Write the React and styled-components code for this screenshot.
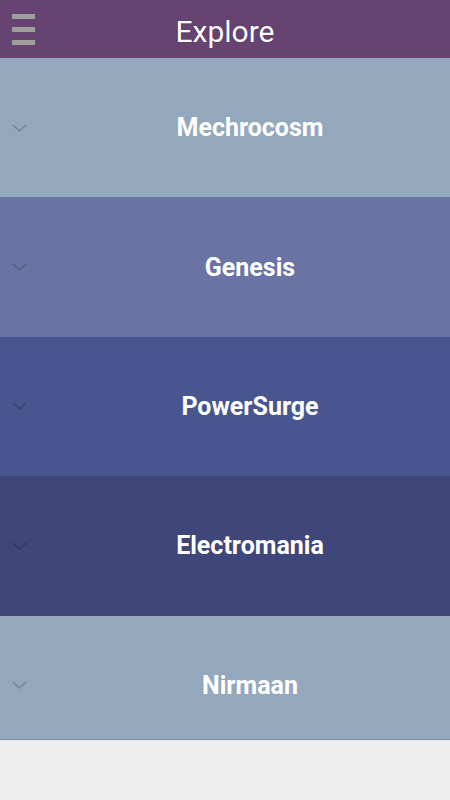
import React from 'react';
import styled, { createGlobalStyle } from 'styled-components';

const GlobalStyle = createGlobalStyle`
  html, body {
    margin: 0;
    padding: 0;
    background: #eeeeee;
    font-family: Roboto, "Liberation Sans", sans-serif;
  }
`;

const categories = [
    { name: 'Mechrocosm', color: '#93a8bc' },
    { name: 'Genesis', color: '#6974a4' },
    { name: 'PowerSurge', color: '#48568f' },
    { name: 'Electromania', color: '#3f4679' },
    { name: 'Nirmaan', color: '#93a8bc' },
];

export default function App() {
    return (
        <Screen>
            <GlobalStyle />
            <Header>
                <MenuButton aria-label="menu">
                    <span />
                    <span />
                    <span />
                </MenuButton>
                <Title>Explore</Title>
            </Header>
            <List>
                {categories.map(cat => (
                    <Row key={cat.name} $bg={cat.color}>
                        <Chevron viewBox="0 0 16 8">
                            <path d="M1 1 L8 7 L15 1" />
                        </Chevron>
                        <RowTitle>{cat.name}</RowTitle>
                    </Row>
                ))}
            </List>
        </Screen>
    );
}

const Screen = styled.div`
    width: 450px;
    height: 800px;
    background: #eeeeee;
    overflow: hidden;
`;

const Header = styled.header`
    height: 58px;
    background: #674372;
    display: flex;
    align-items: center;
    justify-content: center;
    position: relative;
`;

const MenuButton = styled.div`
    position: absolute;
    left: 12px;
    top: 14px;
    width: 23px;
    display: flex;
    flex-direction: column;
    gap: 8px;
    span {
        display: block;
        height: 5px;
        background: #9e9e9e;
    }
`;

const Title = styled.h1`
    margin: 0;
    color: #ffffff;
    font-size: 30px;
    font-weight: 400;
    text-shadow: 0 0 1px #3a1f45;
    line-height: 1;
    padding-top: 5px;
`;

const List = styled.div`
    height: 682px;
    overflow: hidden;
    border-bottom: 1px solid #7d90a3;
    box-sizing: border-box;
`;

const Row = styled.div`
    height: 139.4px;
    background: ${p => p.$bg};
    display: flex;
    align-items: center;
    justify-content: center;
    padding-left: 50px;
    position: relative;
`;

const Chevron = styled.svg`
    position: absolute;
    left: 12px;
    top: 50%;
    width: 15px;
    height: 8px;
    margin-top: -4px;
    fill: none;
    stroke: rgba(0, 0, 0, 0.18);
    stroke-width: 1.8;
`;

const RowTitle = styled.h2`
    margin: 0;
    color: #ffffff;
    font-size: 25px;
    font-weight: 700;
`;
